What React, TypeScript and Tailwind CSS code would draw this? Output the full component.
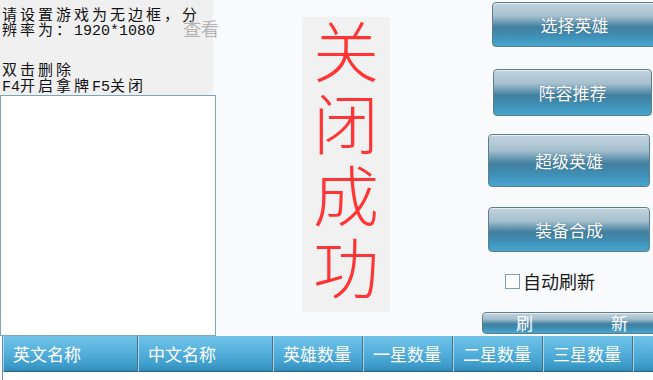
import React from "react";

const cjk = { fontFamily: '"Noto Sans CJK SC", "Noto Sans", sans-serif' };
const mono = { fontFamily: '"Liberation Mono", "Noto Sans CJK SC", monospace' };

const btnBg =
  "bg-[linear-gradient(to_bottom,#c2d4de_0%,#a6c0ce_30%,#6798b2_46%,#427f9e_56%,#3f8db3_75%,#47a6cf_100%)]";

function Btn({ label, cls }: { label: string; cls: string }) {
  return (
    <div
      className={`${cls} ${btnBg} flex items-center justify-center rounded-[4px] border border-[#5f7d8c] text-[17px] text-white shadow-[inset_0_1px_0_rgba(255,255,255,0.6)] [text-shadow:0_0_1px_rgba(0,40,70,0.5)]`}
      style={cjk}
    >
      {label}
    </div>
  );
}

const headBg =
  "bg-[linear-gradient(to_bottom,#72c3e8_0%,#58b2de_40%,#3f9dcb_80%,#2f86b4_100%)]";

const cols: [string, string][] = [
  ["英文名称", "w-[135px]"],
  ["中文名称", "w-[135px]"],
  ["英雄数量", "w-[90px]"],
  ["一星数量", "w-[90px]"],
  ["二星数量", "w-[90px]"],
  ["三星数量", "w-[90px]"],
  ["", "w-[40px]"],
];

export default function App() {
  return (
    <div
      className="relative flex h-[380px] w-[653px] flex-col overflow-hidden bg-[#f8fafc] text-black"
      style={cjk}
    >
      <div className="relative flex h-[336px] shrink-0">
        {/* left column */}
        <div className="flex w-[216px] shrink-0 flex-col">
          <div className="h-[95px] w-[213px] bg-[#f0f0f0] pl-[2px] pt-[6px] text-[15px] leading-[15px] tracking-[3px] text-[#111]">
            <div>
              请设置游戏为无边框，分
              <br />
              辨率为：<span className="tracking-normal" style={mono}>1920*1080</span>
            </div>
            <div className="mt-[22px] leading-[16px]">
              双击删除
              <br />
              <span className="tracking-normal" style={mono}>F4</span>开启拿牌
              <span className="tracking-normal" style={mono}>F5</span>关闭
            </div>
          </div>
          <div className="h-[241px] w-[216px] border border-[#7fa6b8] bg-white" />
        </div>

        {/* "查看" label */}
        <div className="absolute left-[183px] top-[18px] text-[18px] leading-[20px] text-[#b4b4b4]">
          查看
        </div>

        {/* middle red text panel */}
        <div className="ml-[86px] mt-[17px] flex h-[295px] w-[88px] shrink-0 flex-col items-center bg-[#f1f1f1] text-[66px] font-light leading-[72px] text-[#ff3535]">
          <span className="-mt-[5px]">关</span>
          <span>闭</span>
          <span>成</span>
          <span>功</span>
        </div>

        {/* right column */}
        <div className="ml-[92px] flex w-[171px] shrink-0 flex-col">
          <Btn label="选择英雄" cls="ml-[10px] mt-[2px] h-[45px] w-[165px]" />
          <Btn label="阵容推荐" cls="ml-[11px] mt-[22px] h-[47px] w-[159px]" />
          <Btn label="超级英雄" cls="ml-[6px] mt-[18px] h-[53px] w-[162px]" />
          <Btn label="装备合成" cls="ml-[6px] mt-[20px] h-[45px] w-[162px]" />
          <div className="ml-[23px] mt-[20px] flex h-[18px] items-center gap-[3px]">
            <div className="h-[15px] w-[15px] border border-[#7d9fb2] bg-white" />
            <span className="text-[18px] leading-[18px] text-[#1a1a1a]">自动刷新</span>
          </div>
          <div
            className={`${btnBg} mt-[22px] flex h-[22px] w-[175px] items-center rounded-[4px] border border-[#5f7d8c] pl-[33px] text-[17px] leading-[20px] text-white shadow-[inset_0_1px_0_rgba(255,255,255,0.6)]`}
          >
            <span>刷</span>
            <span className="ml-[78px]">新</span>
          </div>
        </div>
      </div>

      {/* table header */}
      <div className="ml-[2px] flex h-[36px] shrink-0 border-l border-[#6b8c9c]">
        {cols.map(([t, w], i) => (
          <div
            key={i}
            className={`${w} ${headBg} flex shrink-0 items-center border-r border-[#4d6f80] pl-[10px] text-[17px] text-white shadow-[inset_1px_0_0_rgba(200,235,250,0.7),inset_0_-1px_0_rgba(40,90,120,0.8)]`}
          >
            {t}
          </div>
        ))}
      </div>
      <div className="ml-[2px] flex-1 border-l border-[#6b8c9c] bg-white" />
    </div>
  );
}
